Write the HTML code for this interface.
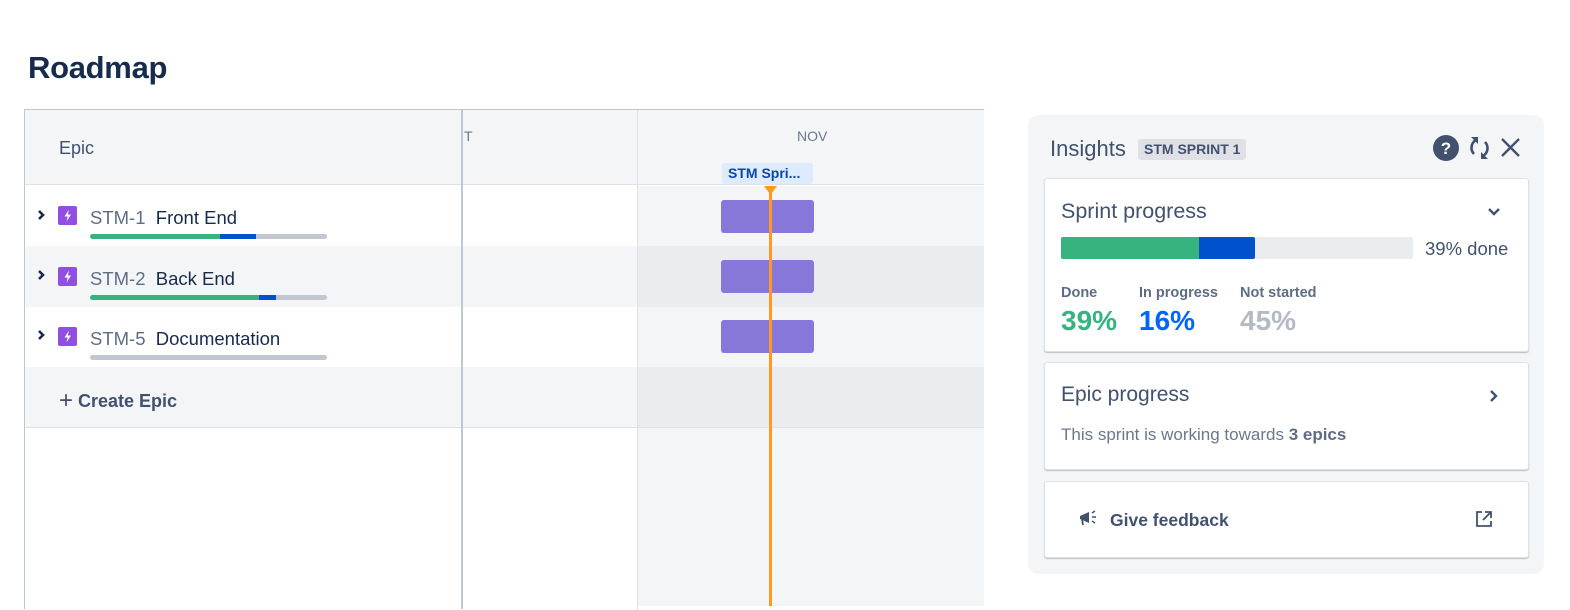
<!DOCTYPE html>
<html><head><meta charset="utf-8"><style>
*{margin:0;padding:0;box-sizing:border-box}
body{width:1570px;height:605px;background:#fff;font-family:"Liberation Sans",sans-serif;position:relative;overflow:hidden;color:#172b4d}
.a{position:absolute}
</style></head><body>
<div class="a" style="left:28px;top:50px;font-size:31px;font-weight:bold;color:#172b4d;letter-spacing:-0.3px">Roadmap</div>

<div class="a" style="left:24px;top:109px;width:439px;height:500px;border-left:1px solid #c1c7d0;border-top:1px solid #c1c7d0"></div>
<div class="a" style="left:25px;top:110px;width:437px;height:75px;background:#f4f5f7;border-bottom:1px solid #dfe1e6"></div>
<div class="a" style="left:59px;top:138px;font-size:18px;color:#42526e">Epic</div>
<div class="a" style="left:25px;top:246px;width:437px;height:61px;background:#f4f5f7"></div>
<div class="a" style="left:25px;top:367px;width:437px;height:61px;background:#f4f5f7;border-bottom:1px solid #dfe1e6"></div>

<svg class="a" style="left:34px;top:204px" width="14" height="170"><g fill="none" stroke="#172b4d" stroke-width="2.6"><path d="M5 7l4 4-4 4"/><path d="M5 67l4 4-4 4"/><path d="M5 127l4 4-4 4"/></g></svg>
<svg class="a" style="left:58px;top:206px" width="20" height="140">
<g><rect x="0" y="0" width="19" height="19" rx="2" fill="#904ee2"/><path d="M11 3.5l-4.5 7h3.2l-1.2 5 4.5-7h-3.2z" fill="#fff"/></g>
<g transform="translate(0,61)"><rect x="0" y="0" width="19" height="19" rx="2" fill="#904ee2"/><path d="M11 3.5l-4.5 7h3.2l-1.2 5 4.5-7h-3.2z" fill="#fff"/></g>
<g transform="translate(0,121)"><rect x="0" y="0" width="19" height="19" rx="2" fill="#904ee2"/><path d="M11 3.5l-4.5 7h3.2l-1.2 5 4.5-7h-3.2z" fill="#fff"/></g>
</svg>
<div class="a" style="left:90px;top:207px;font-size:18.5px;white-space:nowrap"><span style="color:#5e6c84">STM-1</span>&nbsp;&nbsp;Front End</div>
<div class="a" style="left:90px;top:268px;font-size:18.5px;white-space:nowrap"><span style="color:#5e6c84">STM-2</span>&nbsp;&nbsp;Back End</div>
<div class="a" style="left:90px;top:328px;font-size:18.5px;white-space:nowrap"><span style="color:#5e6c84">STM-5</span>&nbsp;&nbsp;Documentation</div>
<div class="a" style="left:90px;top:234px;width:237px;height:5px;border-radius:3px;background:linear-gradient(90deg,#36b37e 0 130px,#0052cc 130px 166px,#c1c7d0 166px)"></div>
<div class="a" style="left:90px;top:295px;width:237px;height:5px;border-radius:3px;background:linear-gradient(90deg,#36b37e 0 169px,#0052cc 169px 186px,#c1c7d0 186px)"></div>
<div class="a" style="left:90px;top:355px;width:237px;height:5px;border-radius:3px;background:#c1c7d0"></div>
<div class="a" style="left:59px;top:386px;font-size:18px;font-weight:bold;color:#42526e;white-space:nowrap"><span style="font-weight:normal;font-size:24px;position:relative;top:1px">+</span> Create Epic</div>

<div class="a" style="left:461px;top:109px;width:2px;height:500px;background:#c1c7d0"></div>

<div class="a" style="left:463px;top:109px;width:521px;height:1px;background:#c1c7d0"></div>
<div class="a" style="left:463px;top:110px;width:521px;height:75px;background:#f4f5f7;border-bottom:1px solid #dfe1e6"></div>
<div class="a" style="left:463px;top:246px;width:175px;height:61px;background:#f4f5f7"></div>
<div class="a" style="left:463px;top:367px;width:175px;height:61px;background:#f4f5f7;border-bottom:1px solid #dfe1e6"></div>
<div class="a" style="left:638px;top:186px;width:346px;height:420px;background:#f4f5f7"></div>
<div class="a" style="left:638px;top:246px;width:346px;height:61px;background:#ebecf0"></div>
<div class="a" style="left:638px;top:367px;width:346px;height:61px;background:#ebecf0;border-bottom:1px solid #dfe1e6"></div>
<div class="a" style="left:637px;top:110px;width:1px;height:500px;background:#dfe1e6"></div>
<div class="a" style="left:464px;top:128px;font-size:14px;color:#6b778c">T</div>
<div class="a" style="left:797px;top:128px;font-size:14px;color:#6b778c">NOV</div>
<div class="a" style="left:722px;top:163px;width:91px;height:21px;background:#deebff;border-radius:3px;font-size:14px;font-weight:bold;color:#0747a6;padding:2px 0 0 6px;white-space:nowrap">STM Spri...</div>
<div class="a" style="left:721px;top:200px;width:93px;height:33px;background:#8777d9;border-radius:3px"></div>
<div class="a" style="left:721px;top:260px;width:93px;height:33px;background:#8777d9;border-radius:3px"></div>
<div class="a" style="left:721px;top:320px;width:93px;height:33px;background:#8777d9;border-radius:3px"></div>
<div class="a" style="left:769px;top:186px;width:3px;height:420px;background:#ff991f"></div>
<svg class="a" style="left:764px;top:186px" width="13" height="10"><path d="M0 0h13l-6.5 9z" fill="#ff991f"/></svg>

<div class="a" style="left:1028px;top:115px;width:516px;height:459px;background:#f4f5f7;border-radius:10px"></div>
<div class="a" style="left:1050px;top:136px;font-size:22px;color:#42526e">Insights</div>
<div class="a" style="left:1138px;top:139px;height:21px;background:#dfe1e6;border-radius:3px;font-size:14px;font-weight:bold;color:#42526e;padding:2px 6px 0">STM SPRINT 1</div>
<svg class="a" style="left:1432px;top:135px" width="95" height="28">
<circle cx="14" cy="13" r="13" fill="#42526e"/><text x="14" y="19" font-family="Liberation Sans" font-weight="bold" font-size="17" fill="#fff" text-anchor="middle">?</text>
<g fill="none" stroke="#42526e" stroke-width="2.6"><path d="M44 5a9 9 0 0 0-2 14"/><path d="M51 21a9 9 0 0 0 2-14"/></g>
<path d="M39 2h7v7z" fill="#42526e"/><path d="M56 24h-7v-7z" fill="#42526e"/>
<g stroke="#42526e" stroke-width="2.4"><path d="M70 4l17 17M87 4l-17 17"/></g>
</svg>

<div class="a" style="left:1044px;top:178px;width:485px;height:174px;background:#fff;border:1px solid #dfe1e6;border-radius:3px;box-shadow:0 1px 1px rgba(9,30,66,.25)"></div>
<div class="a" style="left:1061px;top:199px;font-size:21.5px;color:#42526e">Sprint progress</div>
<svg class="a" style="left:1487px;top:207px" width="14" height="10"><path d="M2 2l5 5 5-5" fill="none" stroke="#42526e" stroke-width="2.4"/></svg>
<div class="a" style="left:1061px;top:237px;width:352px;height:22px;background:#ebecf0;border-radius:2px;overflow:hidden"><div style="width:138px;height:22px;background:#36b37e;float:left"></div><div style="width:56px;height:22px;background:#0052cc;float:left;border-radius:0 2px 2px 0"></div></div>
<div class="a" style="left:1425px;top:238px;font-size:18.5px;color:#42526e">39% done</div>
<div class="a" style="left:1061px;top:285px;font-size:14.5px;font-weight:bold;color:#5e6c84">Done</div>
<div class="a" style="left:1139px;top:285px;font-size:14.5px;font-weight:bold;color:#5e6c84">In progress</div>
<div class="a" style="left:1240px;top:285px;font-size:14.5px;font-weight:bold;color:#5e6c84">Not started</div>
<div class="a" style="left:1061px;top:305px;font-size:28px;font-weight:bold;color:#36b37e">39%</div>
<div class="a" style="left:1139px;top:305px;font-size:28px;font-weight:bold;color:#0065ff">16%</div>
<div class="a" style="left:1240px;top:305px;font-size:28px;font-weight:bold;color:#b3bac5">45%</div>

<div class="a" style="left:1044px;top:362px;width:485px;height:108px;background:#fff;border:1px solid #dfe1e6;border-radius:3px;box-shadow:0 1px 1px rgba(9,30,66,.25)"></div>
<div class="a" style="left:1061px;top:383px;font-size:21px;color:#42526e">Epic progress</div>
<svg class="a" style="left:1489px;top:389px" width="10" height="14"><path d="M2 2l5 5-5 5" fill="none" stroke="#42526e" stroke-width="2.4"/></svg>
<div class="a" style="left:1061px;top:425px;font-size:17px;color:#6b778c">This sprint is working towards <b style="color:#5e6c84">3 epics</b></div>

<div class="a" style="left:1044px;top:481px;width:485px;height:77px;background:#fff;border:1px solid #dfe1e6;border-radius:3px;box-shadow:0 1px 1px rgba(9,30,66,.25)"></div>
<svg class="a" style="left:1079px;top:509px" width="20" height="18"><path d="M1 7l9-4v11L1 10z" fill="#42526e"/><path d="M3 10l1 6" stroke="#42526e" stroke-width="1.8"/><g stroke="#42526e" stroke-width="1.4"><path d="M13 4l3-2M13 8h4M13 12l3 2"/></g></svg>
<div class="a" style="left:1110px;top:510px;font-size:17.5px;font-weight:bold;color:#42526e">Give feedback</div>
<svg class="a" style="left:1475px;top:510px" width="18" height="18"><g fill="none" stroke="#42526e" stroke-width="1.8"><path d="M7 2H2v14h14v-5"/><path d="M10 2h6v6M16 2L8 10"/></g></svg>
</body></html>
